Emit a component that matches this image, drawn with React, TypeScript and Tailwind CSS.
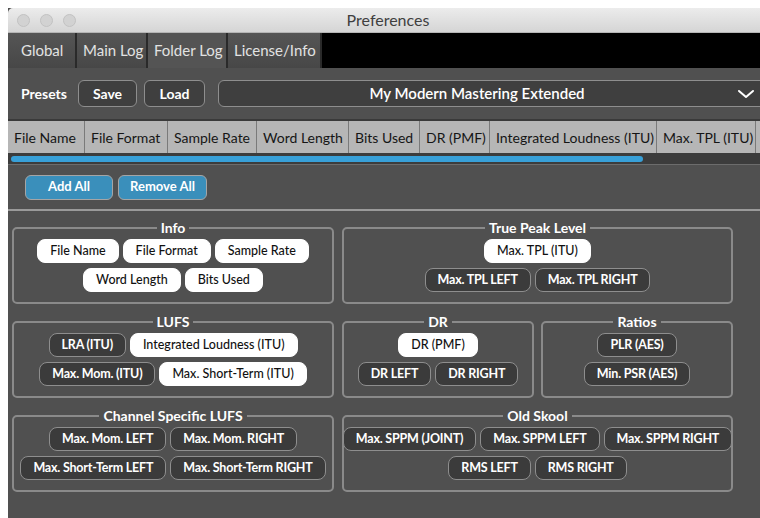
import React from "react";
import clsx from "clsx";

type Chip = { label: string; on?: boolean };

const tabs = ["Global", "Main Log", "Folder Log", "License/Info"];

const columns = [
  { label: "File Name", w: "w-[77px]" },
  { label: "File Format", w: "w-[83px]" },
  { label: "Sample Rate", w: "w-[89px]" },
  { label: "Word Length", w: "w-[92px]" },
  { label: "Bits Used", w: "w-[71px]" },
  { label: "DR (PMF)", w: "w-[70px]" },
  { label: "Integrated Loudness (ITU)", w: "w-[167px]" },
  { label: "Max. TPL (ITU)", w: "w-[99px]" },
  { label: "", w: "w-[60px]" },
];

const Pill = ({ label, on }: Chip) => (
  <span
    className={clsx(
      "h-6 px-3 flex items-center rounded-lg border text-[12.5px] whitespace-nowrap",
      on
        ? "bg-white border-white text-[#111] font-medium"
        : "bg-[#3b3b3b] border-[#8e8e8e] text-white font-bold tracking-[-0.2px]"
    )}
  >
    {label}
  </span>
);

const Group = ({ title, rows, className }: { title: string; rows: Chip[][]; className?: string }) => (
  <fieldset className={clsx("min-w-0 border-2 border-[#8a8a8a] rounded-[5px] px-1 pb-[10px]", className)}>
    <legend className="mx-auto px-1 text-[14px] leading-[14px] font-bold text-white">{title}</legend>
    <div className="flex flex-col items-center gap-[5px] pt-[4px]">
      {rows.map((row, i) => (
        <div key={i} className="flex gap-[4px]">
          {row.map((c) => (
            <Pill key={c.label} {...c} />
          ))}
        </div>
      ))}
    </div>
  </fieldset>
);

const Button = ({ children, className }: { children: React.ReactNode; className?: string }) => (
  <button
    className={clsx(
      "h-[27px] rounded-md border border-[#8e8e8e] bg-[#3f3f3f] text-white text-[14px] font-bold",
      className
    )}
  >
    {children}
  </button>
);

export default function App() {
  return (
    <div
      className="w-[760px] h-[518px] bg-white pl-2 pt-2 overflow-hidden"
      style={{ fontFamily: "Lato, 'Open Sans', sans-serif" }}
    >
      <div className="w-[760px] h-[520px] flex flex-col bg-[#505050]">
        {/* title bar */}
        <div className="relative h-[25px] rounded-tl-[5px] bg-gradient-to-b from-[#ececec] to-[#d5d5d5] border-b border-[#b5b5b5] flex items-center">
          <div className="flex gap-[10px] pl-[9px]">
            <span className="w-[13px] h-[13px] rounded-full bg-[#d2d2d2] border border-[#c2c2c2]" />
            <span className="w-[13px] h-[13px] rounded-full bg-[#d2d2d2] border border-[#c2c2c2]" />
            <span className="w-[13px] h-[13px] rounded-full bg-[#d2d2d2] border border-[#c2c2c2]" />
          </div>
          <span className="absolute inset-x-0 text-center text-[16px] text-[#3f3f3f]">Preferences</span>
        </div>

        {/* tabs */}
        <div className="h-[35px] bg-black flex">
          {tabs.map((t, i) => (
            <div
              key={t}
              className={clsx(
                "h-full flex items-center text-[15px] text-[#e2e2e2] border-r-2 border-[#2a2a2a]",
                i === 0 && "w-[69px] pl-[13px]",
                i === 1 && "w-[71px] pl-[6px]",
                i === 2 && "w-[80px] pl-[6px] bg-[#545454]",
                i === 3 && "w-[94px] pl-[6px]",
                i !== 2 && "bg-gradient-to-b from-[#555] to-[#474747]"
              )}
            >
              {t}
            </div>
          ))}
        </div>

        {/* presets */}
        <div className="h-[51px] flex items-center pl-[13px]">
          <span className="text-white text-[14px] font-bold mr-[11px]">Presets</span>
          <Button className="w-[59px]">Save</Button>
          <Button className="w-[61px] ml-[7px]">Load</Button>
          <div className="ml-[13px] h-[27px] flex-1 rounded-md border border-[#8e8e8e] bg-[#3f3f3f] flex items-center relative">
            <span className="flex-1 pr-[32px] text-center text-white text-[15px] font-semibold">
              My Modern Mastering Extended
            </span>
            <svg className="absolute right-[12px]" width="18" height="10" viewBox="0 0 18 10">
              <path d="M2 2 L9 8 L16 2" fill="none" stroke="white" strokeWidth="2" strokeLinecap="round" strokeLinejoin="round" />
            </svg>
          </div>
        </div>

        {/* table header */}
        <div className="h-[34px] flex bg-[#b6b6b6] border-t-2 border-[#3a3a3a]">
          {columns.map((c, i) => (
            <div
              key={i}
              className={clsx(
                c.w,
                "shrink-0 flex items-center pl-[6px] text-[14px] text-[#151515] border-r border-[#7a7a7a]"
              )}
            >
              {c.label}
            </div>
          ))}
        </div>

        {/* horizontal scroll bar */}
        <div className="h-[12px] bg-[#3c3c3c] border-b border-[#6c6c6c] flex items-center pl-[3px]">
          <div className="h-[6px] w-[632px] rounded-full bg-[#38a0d8]" />
        </div>

        <div className="h-[44px] flex items-center gap-[5px] pl-[17px]">
          <button className="h-[25px] w-[88px] rounded-md border border-[#a5a5a5] bg-[#3a8fbb] text-white text-[13px] font-bold">
            Add All
          </button>
          <button className="h-[25px] w-[89px] rounded-md border border-[#a5a5a5] bg-[#3a8fbb] text-white text-[13px] font-bold">
            Remove All
          </button>
        </div>

        <div className="h-[2px] bg-[#9a9a9a]" />

        {/* column pickers */}
        <div className="flex flex-col gap-[11px] pl-[4px] pt-[10px]">
          <div className="flex gap-[8px]">
            <Group
              title="Info"
              className="w-[322px]"
              rows={[
                [{ label: "File Name", on: true }, { label: "File Format", on: true }, { label: "Sample Rate", on: true }],
                [{ label: "Word Length", on: true }, { label: "Bits Used", on: true }],
              ]}
            />
            <Group
              title="True Peak Level"
              className="w-[391px]"
              rows={[[{ label: "Max. TPL (ITU)", on: true }], [{ label: "Max. TPL LEFT" }, { label: "Max. TPL RIGHT" }]]}
            />
          </div>
          <div className="flex gap-[8px]">
            <Group
              title="LUFS"
              className="w-[322px]"
              rows={[
                [{ label: "LRA (ITU)" }, { label: "Integrated Loudness (ITU)", on: true }],
                [{ label: "Max. Mom. (ITU)" }, { label: "Max. Short-Term (ITU)", on: true }],
              ]}
            />
            <Group
              title="DR"
              className="w-[192px]"
              rows={[[{ label: "DR (PMF)", on: true }], [{ label: "DR LEFT" }, { label: "DR RIGHT" }]]}
            />
            <Group
              title="Ratios"
              className="w-[192px] -ml-[1px]"
              rows={[[{ label: "PLR (AES)" }], [{ label: "Min. PSR (AES)" }]]}
            />
          </div>
          <div className="flex gap-[8px]">
            <Group
              title="Channel Specific LUFS"
              className="w-[322px]"
              rows={[
                [{ label: "Max. Mom. LEFT" }, { label: "Max. Mom. RIGHT" }],
                [{ label: "Max. Short-Term LEFT" }, { label: "Max. Short-Term RIGHT" }],
              ]}
            />
            <Group
              title="Old Skool"
              className="w-[391px]"
              rows={[
                [{ label: "Max. SPPM (JOINT)" }, { label: "Max. SPPM LEFT" }, { label: "Max. SPPM RIGHT" }],
                [{ label: "RMS LEFT" }, { label: "RMS RIGHT" }],
              ]}
            />
          </div>
        </div>
      </div>
    </div>
  );
}
